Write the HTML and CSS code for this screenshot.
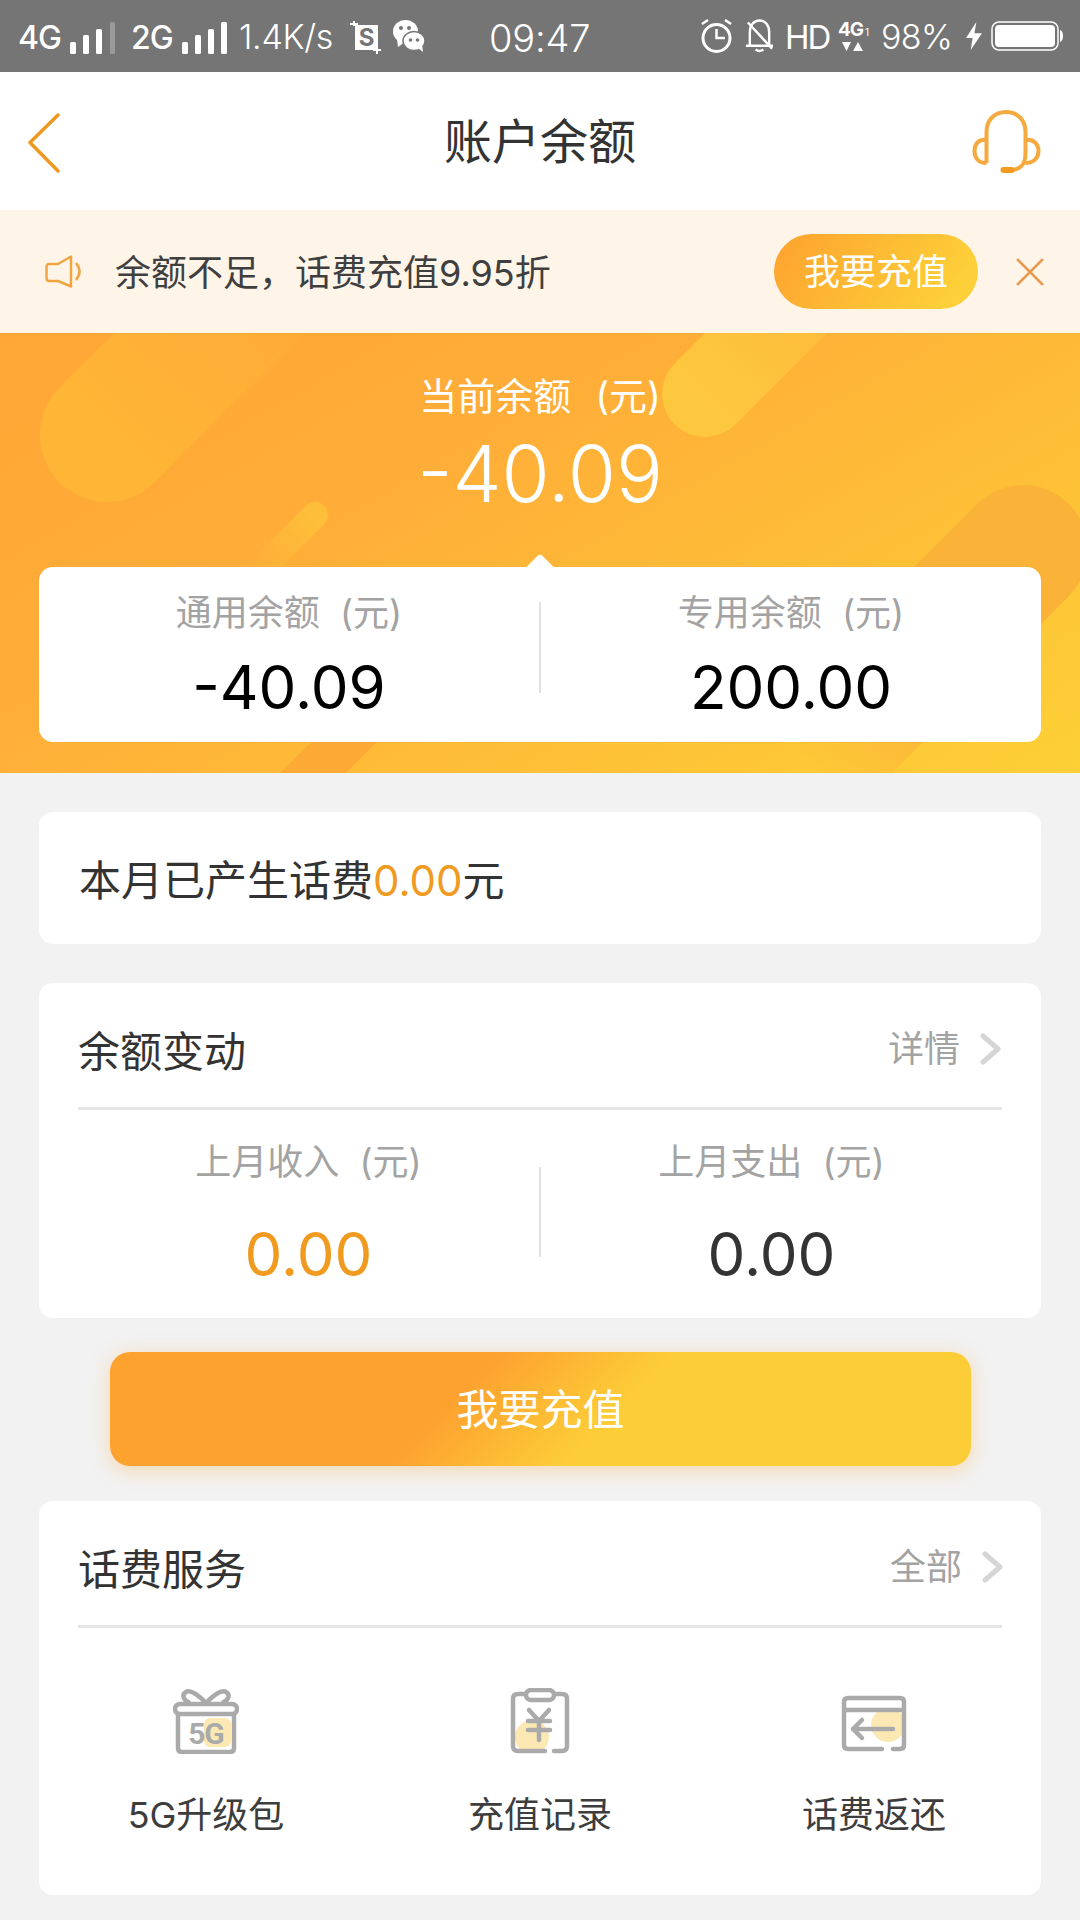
FILE: index.html
```html
<!DOCTYPE html>
<html lang="zh-CN">
<head>
<meta charset="utf-8">
<title>账户余额</title>
<link rel="stylesheet" href="styles.css">
</head>
<body>
<div class="status">
  <div class="status-left">
    <span class="st-net">4G</span>
    <svg class="sig" width="45" height="32" viewBox="0 0 45 32"><rect x="0" y="20" width="6" height="12" rx="1.5" fill="#fff"/><rect x="13" y="13" width="6" height="19" rx="1.5" fill="#fff"/><rect x="26" y="7" width="6" height="25" rx="1.5" fill="#fff"/><rect x="40" y="0" width="5" height="32" rx="1.5" fill="#9a9a9a"/></svg>
    <span class="st-net st-net2">2G</span>
    <svg class="sig" width="45" height="32" viewBox="0 0 45 32"><rect x="0" y="20" width="6" height="12" rx="1.5" fill="#fff"/><rect x="13" y="13" width="6" height="19" rx="1.5" fill="#fff"/><rect x="26" y="7" width="6" height="25" rx="1.5" fill="#fff"/><rect x="39" y="0" width="6" height="32" rx="1.5" fill="#fff"/></svg>
    <span class="st-speed">1.4K/s</span>
    <svg class="st-shot" width="31" height="33" viewBox="0 0 31 33"><path d="M0 3H8M4 0V5M27 27V33M23 29H31" stroke="#fff" stroke-width="2" fill="none"/><rect x="5" y="4" width="23" height="25" fill="#fff"/><text x="16.500" y="25" text-anchor="middle" class="st-shot-s">S</text></svg>
    <svg class="st-wx" width="32" height="32" viewBox="0 0 32 32"><ellipse cx="12.500" cy="11.500" rx="12.500" ry="11.500" fill="#fff"/><path d="M4 19L5 27L12 22Z" fill="#fff"/><ellipse cx="21" cy="21" rx="11" ry="9.500" fill="#fff" stroke="#757575" stroke-width="1.500"/><path d="M25 28L30 32L29 24Z" fill="#fff"/><circle cx="8" cy="8" r="2" fill="#757575"/><circle cx="16" cy="8" r="2" fill="#757575"/><circle cx="17.500" cy="20" r="1.800" fill="#757575"/><circle cx="24.500" cy="20" r="1.800" fill="#757575"/></svg>
  </div>
  <span class="st-time">09:47</span>
  <div class="status-right">
    <svg width="33" height="36" viewBox="0 0 33 36"><circle cx="16.500" cy="20" r="13.500" fill="none" stroke="#fff" stroke-width="3"/><path d="M16.500 11V20H25" fill="none" stroke="#fff" stroke-width="2.500"/><path d="M2 6L8 2M31 6L25 2" stroke="#fff" stroke-width="2.500"/></svg>
    <svg class="st-bell" width="29" height="36" viewBox="0 0 30 36"><path d="M5 27V14C5 7 9 2 15 2S25 7 25 14V27M1 28H29M11 32Q15 35 19 32" fill="none" stroke="#fff" stroke-width="2.500"/><path d="M3 4L28 31" stroke="#fff" stroke-width="2.500"/></svg>
    <span class="st-hd">HD</span>
    <div class="st-4g"><span class="st-4g-text">4G<i class="st-4g-one">1</i></span><svg width="22" height="10" viewBox="0 0 22 10"><path d="M0 0H9L4.500 9ZM11 9L16 0L21 9Z" fill="#fff"/></svg></div>
    <span class="st-batt-text">98%</span>
    <svg class="st-bolt" width="16" height="30" viewBox="0 0 17 30"><path d="M11 0L0 17H7L5 30L17 12H9Z" fill="#fff"/></svg>
    <svg class="st-batt" width="72" height="30" viewBox="0 0 72 30"><rect x="1" y="1" width="66" height="28" rx="7" fill="none" stroke="#fff" stroke-width="1.500"/><rect x="4" y="4" width="60" height="22" rx="4" fill="#fff"/><path d="M69 9Q72 10 72 15T69 21Z" fill="#fff"/></svg>
  </div>
</div>

<header class="nav">
  <svg class="nav-back" width="32" height="60" viewBox="0 0 32 60"><path d="M30 2L2 29.500L30 58" fill="none" stroke="#ef981f" stroke-width="3.500" stroke-linecap="round" stroke-linejoin="round"/></svg>
  <h1 class="nav-title">账户余额</h1>
  <svg class="nav-help" width="69" height="64" viewBox="0 0 68 64"><path d="M14 53V22C14 10 22 2 33.500 2S53 10 53 22V44C53 55 47 60 38 60" fill="none" stroke="#f5a93f" stroke-width="4"/><path d="M14 30C6 29 2 34 2 41S6 53 14 53M53 30C61 29 66 34 66 41S61 53 53 53" fill="none" stroke="#f5a93f" stroke-width="4"/><path d="M31 60H39" stroke="#f39a20" stroke-width="6" stroke-linecap="round"/></svg>
</header>

<div class="notice">
  <svg class="notice-icon" width="38" height="34" viewBox="0 0 38 34"><path d="M26 1.500V31.500L13 26H4Q1.500 26 1.500 23V12Q1.500 9 4 9H13Z" fill="none" stroke="#f0a640" stroke-width="2.500" stroke-linejoin="round"/><path d="M31 8Q38 16.500 31 25" fill="none" stroke="#f0a640" stroke-width="2.500"/></svg>
  <span class="notice-text">余额不足，话费充值9.95折</span>
  <span class="notice-btn">我要充值</span>
  <svg class="notice-close" width="28" height="28" viewBox="0 0 30 30"><path d="M2 2L28 28M28 2L2 28" stroke="#e89b4e" stroke-width="3" stroke-linecap="round"/></svg>
</div>

<section class="hero">
  <svg class="hero-bg" width="1080" height="440" viewBox="0 333 1080 440">
    <defs>
      <linearGradient id="capA" gradientUnits="userSpaceOnUse" x1="107" y1="435" x2="300" y2="245"><stop offset="0" stop-color="#ffb536"/><stop offset="1" stop-color="#ffb536" stop-opacity="0"/></linearGradient>
      <linearGradient id="capB" gradientUnits="userSpaceOnUse" x1="705" y1="394" x2="860" y2="240"><stop offset="0" stop-color="#fdc73e"/><stop offset="1" stop-color="#fdc73e" stop-opacity=".25"/></linearGradient>
      <linearGradient id="capC" gradientUnits="userSpaceOnUse" x1="315" y1="515" x2="255" y2="575"><stop offset="0" stop-color="#fdbf39"/><stop offset="1" stop-color="#fdbf39" stop-opacity="0"/></linearGradient>
      <linearGradient id="capD" gradientUnits="userSpaceOnUse" x1="1023" y1="550" x2="810" y2="763"><stop offset="0" stop-color="#fbb239"/><stop offset=".55" stop-color="#fbb239"/><stop offset="1" stop-color="#fbb239" stop-opacity="0"/></linearGradient>
    </defs>
    <path d="M107 435L340 202" stroke="url(#capA)" stroke-width="134" stroke-linecap="round"/>
    <path d="M705 394L880 219" stroke="url(#capB)" stroke-width="86" stroke-linecap="round"/>
    <path d="M315 515L240 590" stroke="url(#capC)" stroke-width="26" stroke-linecap="round"/>
    <path d="M1023 550L780 793" stroke="url(#capD)" stroke-width="130" stroke-linecap="round"/>
    <path d="M420 666L280 806" stroke="#fca936" stroke-width="46"/>
  </svg>
  <p class="hero-label">当前余额<span class="unit">(元)</span></p>
  <p class="hero-amount">-40.09</p>
  <div class="balance">
    <div class="balance-col">
      <p class="label">通用余额<span class="unit">(元)</span></p>
      <p class="balance-val">-40.09</p>
    </div>
    <i class="balance-sep"></i>
    <div class="balance-col">
      <p class="label">专用余额<span class="unit">(元)</span></p>
      <p class="balance-val">200.00</p>
    </div>
  </div>
</section>

<main class="content">
  <section class="card card-line">
    <p class="line-text">本月已产生话费<span class="accent">0.00</span>元</p>
  </section>

  <section class="card">
    <div class="card-head">
      <h2 class="card-title">余额变动</h2>
      <span class="card-more">详情<svg class="chev" width="22" height="32" viewBox="0 0 22 32"><path d="M3 3L18 16L3 29" fill="none" stroke="#d6d6d6" stroke-width="5" stroke-linecap="round" stroke-linejoin="round"/></svg></span>
    </div>
    <div class="flow">
      <div class="flow-col">
        <p class="label">上月收入<span class="unit">(元)</span></p>
        <p class="flow-val accent">0.00</p>
      </div>
      <i class="flow-sep"></i>
      <div class="flow-col">
        <p class="label">上月支出<span class="unit">(元)</span></p>
        <p class="flow-val">0.00</p>
      </div>
    </div>
  </section>

  <button class="cta">我要充值</button>

  <section class="card card-services">
    <div class="card-head">
      <h2 class="card-title">话费服务</h2>
      <span class="card-more">全部<svg class="chev" width="22" height="32" viewBox="0 0 22 32"><path d="M3 3L18 16L3 29" fill="none" stroke="#d6d6d6" stroke-width="5" stroke-linecap="round" stroke-linejoin="round"/></svg></span>
    </div>
    <div class="services">
      <div class="service">
        <svg width="66" height="66" viewBox="0 0 66 66"><rect x="31" y="30" width="27" height="29" rx="6" fill="#fce8b3"/><path d="M5 26V60Q5 64 9 64H57Q61 64 61 60V26" fill="none" stroke="#aaa" stroke-width="4.500"/><rect x="2" y="16" width="62" height="10" rx="5" fill="none" stroke="#aaa" stroke-width="4.500"/><path d="M33 15C26 8 18 1 13 4C8 7 11 13 17 15M33 15C40 8 48 1 53 4C58 7 55 13 49 15" fill="none" stroke="#aaa" stroke-width="4.500"/><text x="33" y="56" text-anchor="middle" class="gift-5g">5G</text></svg>
        <span class="service-name">5G升级包</span>
      </div>
      <div class="service">
        <svg width="60" height="66" viewBox="0 0 60 66"><defs><clipPath id="clipB"><rect x="2" y="5" width="56" height="60" rx="6"/></clipPath></defs><circle cx="22" cy="49" r="17" fill="#fce8b3" clip-path="url(#clipB)"/><path d="M16 6H8Q3 6 3 11V58Q3 63 8 63H35M44 63H52Q57 63 57 58V11Q57 6 52 6H44" fill="none" stroke="#aaa" stroke-width="4.500" stroke-linecap="round"/><rect x="16" y="2" width="28" height="10" rx="5" fill="#fff" stroke="#aaa" stroke-width="4.500"/><path d="M19 22L29 33L39 22M18 33H40M18 42H40M29 33V52" fill="none" stroke="#aaa" stroke-width="4.500" stroke-linecap="round"/></svg>
        <span class="service-name">充值记录</span>
      </div>
      <div class="service">
        <svg width="66" height="66" viewBox="0 0 66 66"><defs><clipPath id="clipC"><rect x="2" y="19" width="62" height="45" rx="4"/></clipPath></defs><circle cx="47" cy="37" r="17" fill="#fce8b3" clip-path="url(#clipC)"/><path d="M41 61H7Q3 61 3 57V14Q3 10 7 10H59Q63 10 63 14V57Q63 61 59 61H52" fill="none" stroke="#aaa" stroke-width="4.500" stroke-linecap="round"/><path d="M3 22H63" stroke="#aaa" stroke-width="4.500"/><path d="M52 41H12M21 32L12 41L21 50" fill="none" stroke="#aaa" stroke-width="4.500" stroke-linecap="round" stroke-linejoin="round"/></svg>
        <span class="service-name">话费返还</span>
      </div>
    </div>
  </section>
</main>
</body>
</html>
```

FILE: styles.css
```css
* { box-sizing: border-box; }
html, body { margin: 0; padding: 0; }
body {
  width: 1080px;
  height: 1920px;
  overflow: hidden;
  background: #f2f2f2;
  font-family: Inter, "Noto Sans CJK SC", sans-serif;
  color: #333;
}
p, h1, h2 { margin: 0; font-weight: 400; }
i { font-style: normal; }

/* status bar */
.status {
  height: 72px;
  background: #757575;
  color: #fff;
  display: flex;
  align-items: center;
  padding-left: 18px;
  padding-right: 17px;
}
.status-left { display: flex; align-items: center; width: 471px; flex: none; }
.st-net { font-size: 32px; font-weight: 500; line-height: 40px; width: 52px; margin-top: 4px; letter-spacing: -1px; }
.st-net2 { width: 51px; margin-left: 16px; }
.sig { margin-top: 3px; flex: none; }
.st-speed { font-size: 34px; line-height: 40px; width: 99px; margin-left: 12px; font-weight: 300; margin-top: 2px; letter-spacing: -.3px; white-space: nowrap; }
.st-shot { margin-left: 12px; margin-top: 2px; flex: none; }
.st-shot-s { font-size: 24px; font-weight: 700; fill: #757575; }
.st-wx { margin-left: 12px; flex: none; }
.st-time { font-size: 38px; line-height: 40px; font-weight: 300; margin-top: 3px; letter-spacing: -.2px; }
.status-right { margin-left: auto; display: flex; align-items: center; }
.st-bell { margin-left: 12px; }
.st-hd { font-size: 33px; line-height: 40px; margin-left: 11px; margin-top: 2px; width: 42px; letter-spacing: -2px; }
.st-4g { display: flex; flex-direction: column; align-items: center; margin-left: 10px; width: 32px; line-height: 1; }
.st-4g-text { font-size: 19px; font-weight: 700; line-height: 20px; letter-spacing: -1px; }
.st-4g-one { font-size: 10px; font-weight: 400; margin-left: 2px; }
.st-batt-text { font-size: 34px; line-height: 40px; width: 71px; margin-left: 12px; font-weight: 300; margin-top: 2px; letter-spacing: -.6px; white-space: nowrap; }
.st-bolt { margin-left: 14px; }
.st-batt { margin-left: 9px; }

/* nav */
.nav {
  height: 138px;
  background: #fff;
  display: grid;
  grid-template-columns: 1fr auto 1fr;
  align-items: center;
  padding: 0 39px;
}
.nav-back { margin-top: 3px; margin-left: -11px; }
.nav-title { font-size: 48px; line-height: 60px; color: #333; margin-top: 2px; }
.nav-help { margin-top: 2px; justify-self: end; }

/* notice */
.notice {
  height: 123px;
  background: #fff4e8;
  display: flex;
  align-items: center;
  padding: 0 36px 0 45px;
}
.notice-icon { margin-right: 32px; }
.notice-text { font-size: 36px; line-height: 44px; color: #3f3f3f; flex: 1; margin-top: 3px; }
.notice-btn {
  width: 204px;
  height: 75px;
  padding-top: 2px;
  border-radius: 38px;
  background: linear-gradient(125deg, #fda22f 0%, #fdcf38 85%);
  color: #fff;
  font-size: 36px;
  line-height: 73px;
  text-align: center;
}
.notice-close { margin-left: 38px; }

/* hero */
.hero {
  position: relative;
  height: 440px;
  padding: 39px 39px 0;
  overflow: hidden;
  background: linear-gradient(150deg, #ffa636 0%, #ffad38 35%, #fdd036 100%);
  text-align: center;
  color: #fff;
}
.hero-bg { position: absolute; left: 0; top: 0; }
.hero-label, .hero-amount, .balance { position: relative; }
.hero-label { font-size: 38px; line-height: 48px; }
.hero-label .unit { margin-left: 24px; }
.hero-amount { font-size: 78px; line-height: 92px; margin-top: 8px; font-weight: 300; }
.unit { margin-left: 20px; }

.balance {
  margin-top: 47px;
  height: 175px;
  background: #fff;
  border-radius: 14px;
  display: grid;
  grid-template-columns: 1fr 2px 1fr;
  color: #000;
}
.balance::before {
  content: "";
  position: absolute;
  left: 50%;
  top: -9px;
  width: 22px;
  height: 22px;
  margin-left: -11px;
  background: #fff;
  border-radius: 4px 0 0 0;
  transform: rotate(45deg);
}
.balance-col { position: relative; padding-top: 22px; }
.balance-sep { width: 2px; height: 91px; margin-top: 35px; background: #e2e2e2; }
.label { font-size: 36px; line-height: 48px; color: #a3a3a3; }
.balance-val { font-size: 60px; line-height: 72px; margin-top: 14px; }

/* content */
.content {
  display: flex;
  flex-direction: column;
  gap: 39px;
  padding: 39px 39px 0;
}
.card { background: #fff; border-radius: 14px; }
.card-line { height: 132px; display: flex; align-items: center; padding-left: 40px; padding-top: 6px; }
.line-text { font-size: 42px; line-height: 60px; color: #333; }
.accent { color: #f09a1f; }
.card-head {
  margin: 0 39px;
  height: 127px;
  padding-top: 39px;
  border-bottom: 3px solid #e6e6e6;
  display: flex;
  justify-content: space-between;
  align-items: flex-start;
}
.card-title { font-size: 42px; line-height: 60px; color: #333; }
.card-more { display: flex; align-items: center; font-size: 36px; line-height: 60px; color: #a3a3a3; margin-top: -3px; }
.card-services .card-more { margin-right: -2px; }
.chev { margin-left: 20px; }

.flow { margin: 0 39px; display: grid; grid-template-columns: 1fr 2px 1fr; text-align: center; height: 208px; }
.flow-col { padding-top: 28px; }
.flow-sep { width: 2px; height: 90px; margin-top: 57px; background: #e2e2e2; }
.flow-val { font-size: 60px; line-height: 72px; margin-top: 32px; color: #333; }
.flow-val.accent { color: #f09a1f; }

.cta {
  display: block;
  margin: -5px 70px -4px 71px;
  height: 114px;
  padding: 2px 0 0;
  border: 0;
  border-radius: 20px;
  background: linear-gradient(135deg, #fda22f 40%, #fdcd38 58%);
  box-shadow: 0 4px 20px rgba(253, 165, 50, .35);
  color: #fff;
  font: 400 42px/112px Inter, "Noto Sans CJK SC", sans-serif;
}

.card-services { height: 394px; }
.services { display: grid; grid-template-columns: repeat(3, 1fr); padding-top: 60px; }
.service { display: flex; flex-direction: column; align-items: center; }
.service-name { font-size: 36px; line-height: 50px; margin-top: 36px; color: #3d3d3d; }
.gift-5g { font-family: Roboto, sans-serif; font-size: 30px; font-weight: 700; letter-spacing: -1px; fill: #aaa; }
```
